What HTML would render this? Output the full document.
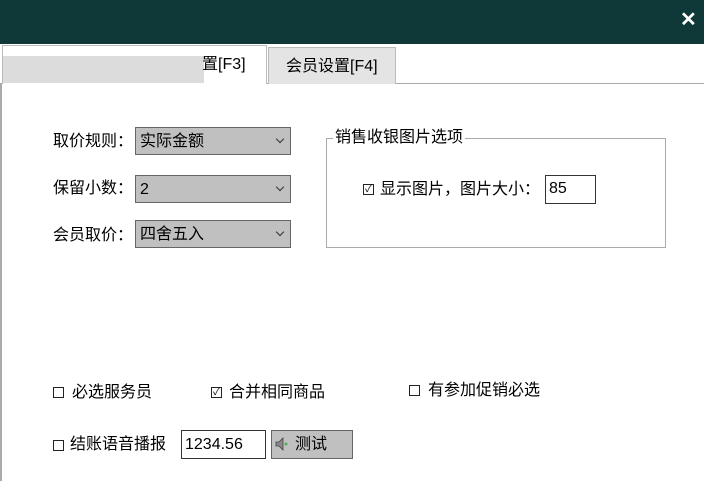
<!DOCTYPE html>
<html><head><meta charset="utf-8"><style>
body{margin:0;width:704px;height:481px;background:#fff;position:relative;overflow:hidden;font-family:"Liberation Sans","Noto Sans CJK SC",sans-serif;font-size:16px;color:#000}
.a{position:absolute}
.t{position:absolute;white-space:nowrap;line-height:20px}
.sel{position:absolute;left:135px;width:156px;height:28px;background:#c0c0c0;border:1px solid #666;box-sizing:border-box}
.sel span{position:absolute;left:4px;top:4px;line-height:20px}
.sel i{position:absolute;right:7px;top:8px;width:5px;height:5px;border-right:1px solid #333;border-bottom:1px solid #333;transform:rotate(45deg)}
.cb{position:absolute;width:11px;height:11px;border:1px solid #222;box-sizing:border-box;font-size:10px;line-height:9px;text-align:center}
.inp{position:absolute;border:1px solid #333;box-sizing:border-box;background:#fff}
</style></head><body>
<div class="a" style="left:0;top:0;width:704px;height:44px;background:#0f3838"></div>
<div class="a" style="left:680px;top:10px;color:#fff;font-size:20px;font-weight:bold;line-height:20px">✕</div>
<div class="a" style="left:0;top:83px;width:704px;height:1px;background:#aaa"></div>
<div class="a" style="left:0;top:83px;width:2px;height:398px;background:#aaa"></div>
<div class="a" style="left:2px;top:45px;width:265px;height:39px;background:#fff;border:1px solid #bbb;border-bottom:none;box-sizing:border-box"></div>
<div class="a" style="left:3px;top:56px;width:201px;height:27px;background:#dcdcdc"></div>
<div class="t" style="left:202px;top:55px">置[F3]</div>
<div class="a" style="left:268px;top:47px;width:128px;height:37px;background:#e4e4e4;border:1px solid #bbb;border-bottom:none;box-sizing:border-box"></div>
<div class="t" style="left:286px;top:57px">会员设置[F4]</div>

<div class="t" style="left:53px;top:132px">取价规则：</div>
<div class="t" style="left:53px;top:179px">保留小数：</div>
<div class="t" style="left:53px;top:226px">会员取价：</div>
<div class="sel" style="top:127px"><span>实际金额</span><i></i></div>
<div class="sel" style="top:175px"><span>2</span><i></i></div>
<div class="sel" style="top:220px"><span>四舍五入</span><i></i></div>

<div class="a" style="left:326px;top:138px;width:340px;height:110px;border:1px solid #aaa;box-sizing:border-box"></div>
<div class="t" style="left:333px;top:128px;background:#fff;padding:0 2px">销售收银图片选项</div>
<div class="cb" style="left:363px;top:184px">✓</div>
<div class="t" style="left:380px;top:180px">显示图片，图片大小：</div>
<div class="inp" style="left:545px;top:175px;width:51px;height:29px"><span class="t" style="left:3px;top:3px">85</span></div>

<div class="cb" style="left:53px;top:387px"></div>
<div class="t" style="left:72px;top:383px">必选服务员</div>
<div class="cb" style="left:211px;top:387px">✓</div>
<div class="t" style="left:229px;top:383px">合并相同商品</div>
<div class="cb" style="left:409px;top:385px"></div>
<div class="t" style="left:428px;top:381px">有参加促销必选</div>

<div class="cb" style="left:53px;top:440px"></div>
<div class="t" style="left:70px;top:435px">结账语音播报</div>
<div class="inp" style="left:181px;top:430px;width:85px;height:29px"><span class="t" style="left:3px;top:4px">1234.56</span></div>
<div class="a" style="left:271px;top:430px;width:82px;height:29px;background:#c0c0c0;border:1px solid #666;box-sizing:border-box"></div>
<svg class="a" style="left:275px;top:437px" width="14" height="14"><path d="M1 5h3l4-4v12l-4-4H1z" fill="#888" stroke="#444" stroke-width="0.8"/><circle cx="11" cy="7" r="1.5" fill="#5a5"/></svg>
<div class="t" style="left:295px;top:435px">测试</div>
</body></html>
